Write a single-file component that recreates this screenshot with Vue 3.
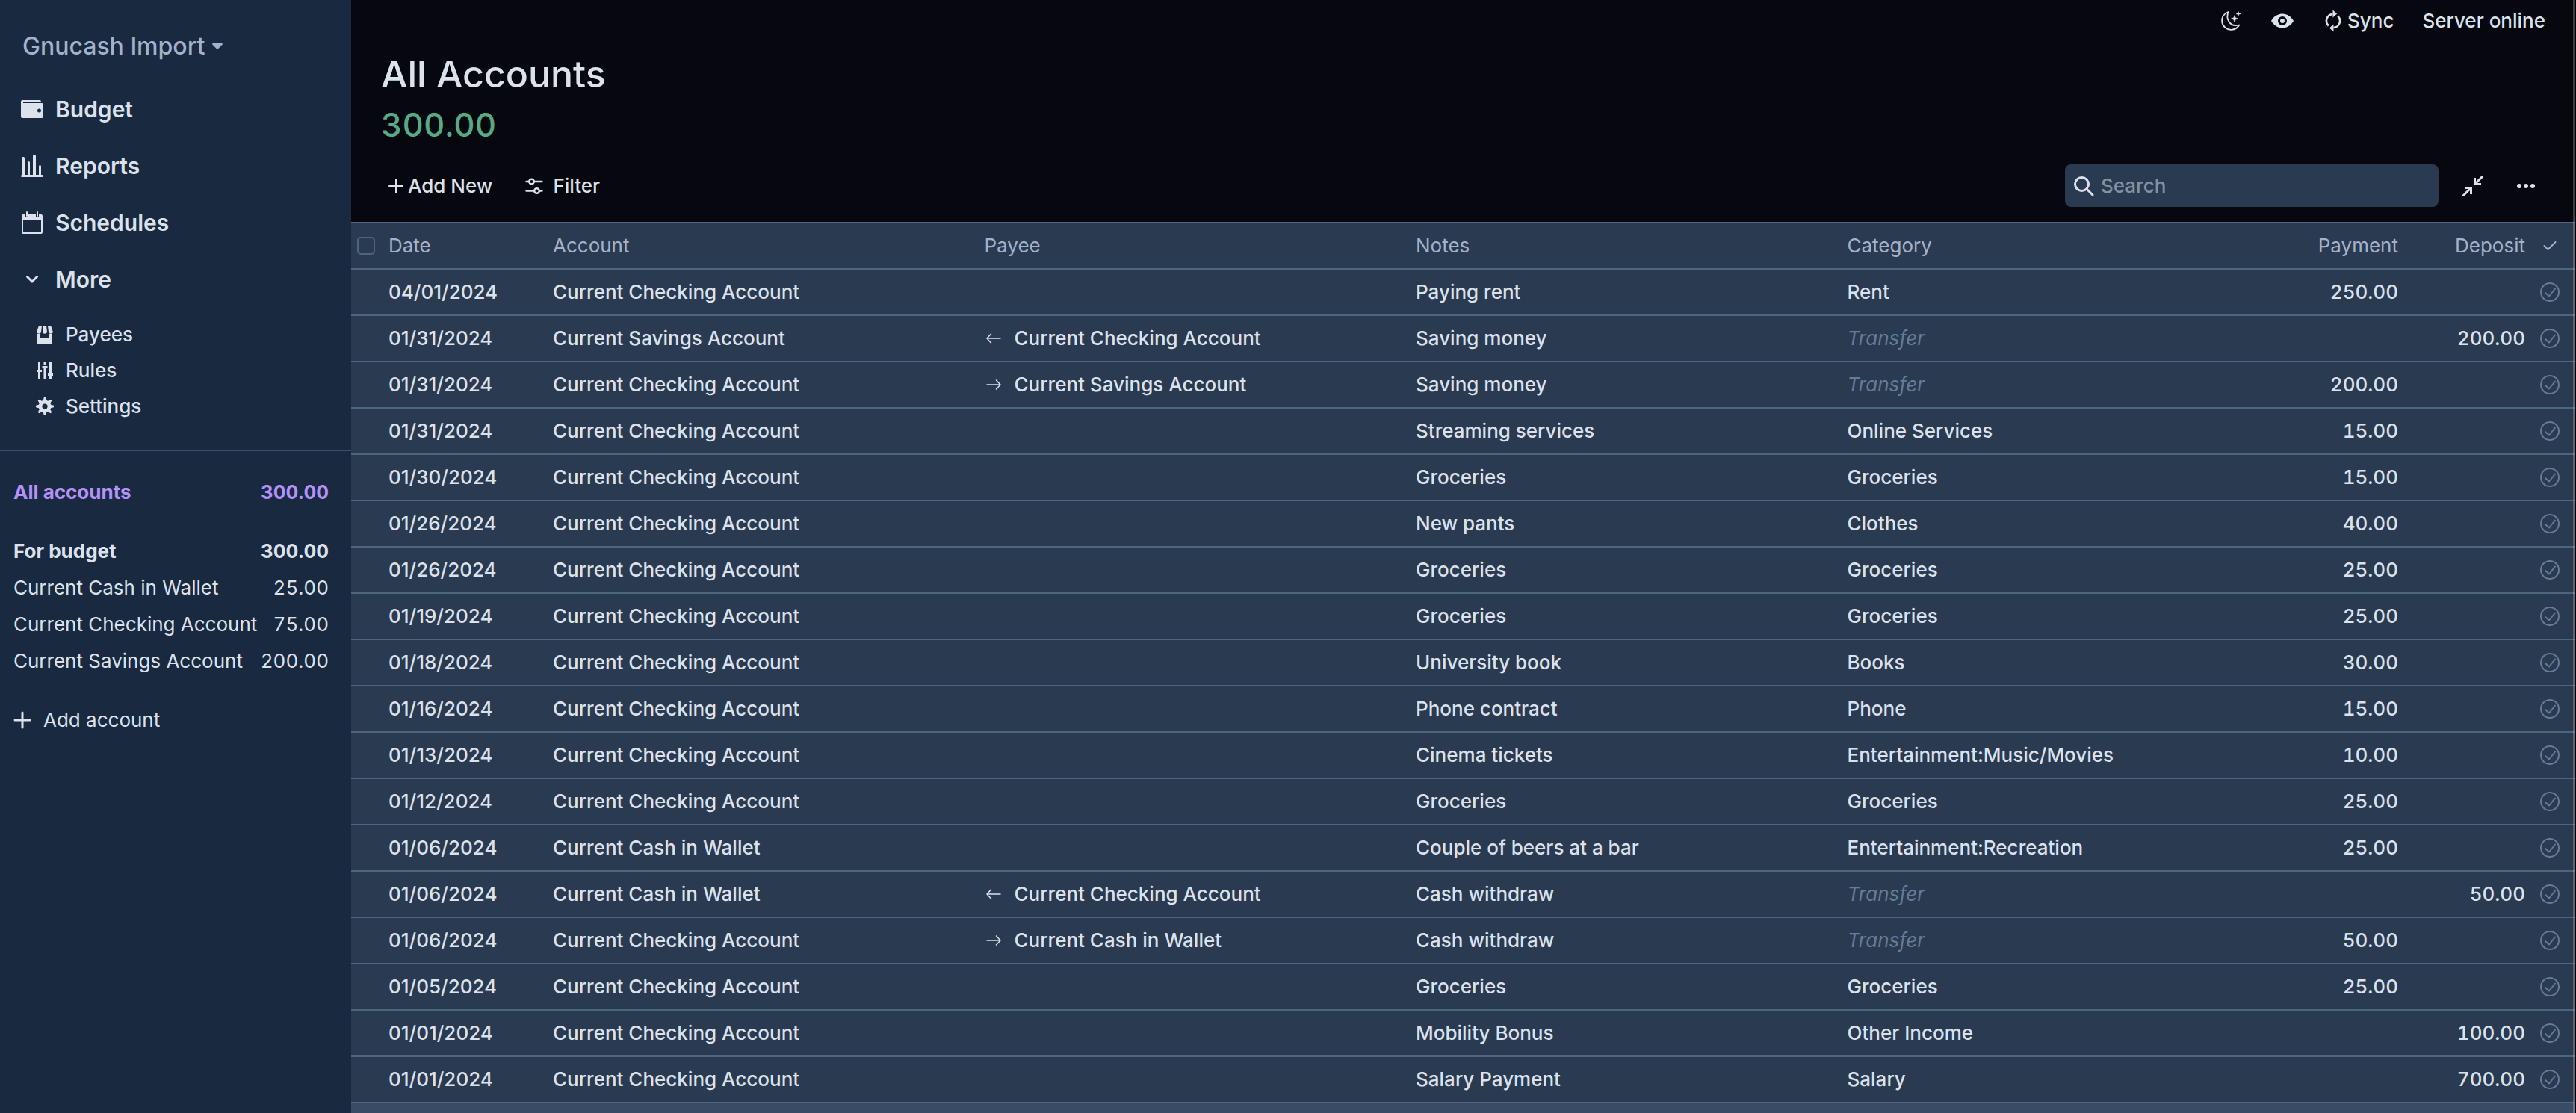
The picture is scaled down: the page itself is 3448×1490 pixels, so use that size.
<script setup>
import { ref } from 'vue'

const search = ref('')
const allSelected = ref(false)

const accounts = [
  { name: 'Current Cash in Wallet', balance: '25.00' },
  { name: 'Current Checking Account', balance: '75.00' },
  { name: 'Current Savings Account', balance: '200.00' },
]

const checking = 'Current Checking Account'
const savings = 'Current Savings Account'
const wallet = 'Current Cash in Wallet'

const transactions = [
  { date: '04/01/2024', account: checking, notes: 'Paying rent', category: 'Rent', payment: '250.00' },
  { date: '01/31/2024', account: savings, from: checking, notes: 'Saving money', deposit: '200.00' },
  { date: '01/31/2024', account: checking, to: savings, notes: 'Saving money', payment: '200.00' },
  { date: '01/31/2024', account: checking, notes: 'Streaming services', category: 'Online Services', payment: '15.00' },
  { date: '01/30/2024', account: checking, notes: 'Groceries', category: 'Groceries', payment: '15.00' },
  { date: '01/26/2024', account: checking, notes: 'New pants', category: 'Clothes', payment: '40.00' },
  { date: '01/26/2024', account: checking, notes: 'Groceries', category: 'Groceries', payment: '25.00' },
  { date: '01/19/2024', account: checking, notes: 'Groceries', category: 'Groceries', payment: '25.00' },
  { date: '01/18/2024', account: checking, notes: 'University book', category: 'Books', payment: '30.00' },
  { date: '01/16/2024', account: checking, notes: 'Phone contract', category: 'Phone', payment: '15.00' },
  { date: '01/13/2024', account: checking, notes: 'Cinema tickets', category: 'Entertainment:Music/Movies', payment: '10.00' },
  { date: '01/12/2024', account: checking, notes: 'Groceries', category: 'Groceries', payment: '25.00' },
  { date: '01/06/2024', account: wallet, notes: 'Couple of beers at a bar', category: 'Entertainment:Recreation', payment: '25.00' },
  { date: '01/06/2024', account: wallet, from: checking, notes: 'Cash withdraw', deposit: '50.00' },
  { date: '01/06/2024', account: checking, to: wallet, notes: 'Cash withdraw', payment: '50.00' },
  { date: '01/05/2024', account: checking, notes: 'Groceries', category: 'Groceries', payment: '25.00' },
  { date: '01/01/2024', account: checking, notes: 'Mobility Bonus', category: 'Other Income', deposit: '100.00' },
  { date: '01/01/2024', account: checking, notes: 'Salary Payment', category: 'Salary', deposit: '700.00' },
]
</script>

<template>
  <div class="app">
    <aside class="sidebar">
      <button type="button" class="file-name">
        Gnucash Import
        <svg width="14" height="8" viewBox="0 0 14 8"><path d="M1 0h12a1 1 0 0 1 .7 1.6L7.8 7.6a1 1 0 0 1-1.6 0L.3 1.6A1 1 0 0 1 1 0z" fill="currentColor" /></svg>
      </button>

      <nav class="nav">
        <a href="#budget" class="nav-item">
          <svg width="30" height="30" viewBox="0 0 30 30" fill="currentColor">
            <path d="M2 3h23a2 2 0 0 1 2 2v1H3v1h25a2 2 0 0 1 2 2v16a2 2 0 0 1-2 2H2a2 2 0 0 1-2-2V5a2 2 0 0 1 2-2zm22.500 11.500a2.500 2.500 0 1 0 0 5 2.500 2.500 0 0 0 0-5z" fill-rule="evenodd" />
          </svg>
          Budget
        </a>
        <a href="#reports" class="nav-item">
          <svg width="30" height="30" viewBox="0 0 30 30" fill="currentColor">
            <rect x="0" y="27" width="30" height="3" rx="1.500" />
            <rect x="1" y="3" width="4" height="25" rx="1.500" />
            <rect x="9" y="9" width="3" height="19" rx="1.500" />
            <rect x="16" y="0" width="4" height="28" rx="1.500" />
            <rect x="24" y="14" width="3" height="14" rx="1.500" />
          </svg>
          Reports
        </a>
        <a href="#schedules" class="nav-item">
          <svg width="30" height="30" viewBox="0 0 30 30" fill="currentColor">
            <path d="M3 4h3v4h4V4h10v4h4V4h3a2 2 0 0 1 2 2v22a2 2 0 0 1-2 2H3a2 2 0 0 1-2-2V6a2 2 0 0 1 2-2zm0 7v17h24V11z" fill-rule="evenodd" />
            <rect x="7" y="0" width="2" height="7" rx="1" />
            <rect x="21" y="0" width="2" height="7" rx="1" />
          </svg>
          Schedules
        </a>
        <button type="button" class="nav-item">
          <svg width="30" height="30" viewBox="0 0 30 30" fill="none" stroke="currentColor" stroke-width="3" stroke-linecap="round"><path d="M8.500 11.500 15 18l6.500-6.500" /></svg>
          More
        </button>
      </nav>

      <nav class="subnav">
        <a href="#payees" class="subnav-item">
          <svg width="24" height="24" viewBox="0 0 24 24" fill="currentColor">
            <path d="M4 0h4L7 8.500C6.500 11.500 2 11.500 1 8.500zM10 0h4l1 8.500c-.5 3-5.500 3-6 0zM16 0h4l3 8.500c-1 3-5.500 3-6 0z" />
            <path d="M2 11h4v5.500h12V11h4v13H2z" />
          </svg>
          Payees
        </a>
        <a href="#rules" class="subnav-item">
          <svg width="24" height="24" viewBox="0 0 24 24" fill="currentColor">
            <path d="M3 0h3v11h2v3H6v10H3V14H1v-3h2zM10.500 0h3v4h-3zM8.500 6h7v3h-2v15h-3V9h-2zM18 0h3v16h2v3h-2v5h-3v-5h-2v-3h2z" />
          </svg>
          Rules
        </a>
        <a href="#settings" class="subnav-item">
          <svg width="24" height="24" viewBox="0 0 20 20" fill="currentColor">
            <path d="M3.940 6.500L2.220 3.640l1.420-1.420L6.500 3.940c.52-.3 1.100-.54 1.700-.7L9 0h2l.8 3.240c.6.16 1.180.4 1.700.7l2.860-1.720 1.420 1.420-1.720 2.860c.3.52.54 1.100.7 1.700L20 9v2l-3.240.8c-.16.6-.4 1.180-.7 1.700l1.720 2.860-1.420 1.420-2.860-1.720c-.52.3-1.100.54-1.700.7L11 20H9l-.8-3.240c-.6-.16-1.180-.4-1.700-.7l-2.860 1.720-1.420-1.420 1.720-2.860c-.3-.52-.54-1.100-.7-1.700L0 11V9l3.240-.8c.16-.6.4-1.180.7-1.700zM10 13a3 3 0 1 0 0-6 3 3 0 0 0 0 6z" fill-rule="evenodd" />
          </svg>
          Settings
        </a>
      </nav>

      <div class="accounts">
        <a href="#all" class="account total active"><span>All accounts</span><span class="num">300.00</span></a>
        <a href="#for-budget" class="account total group"><span>For budget</span><span class="num">300.00</span></a>
        <a v-for="a in accounts" :key="a.name" href="#account" class="account">
          <span>{{ a.name }}</span><span class="num">{{ a.balance }}</span>
        </a>
        <button type="button" class="add-account">
          <svg width="24" height="24" viewBox="0 0 24 24" stroke="currentColor" stroke-width="3" stroke-linecap="round"><path d="M12 2v20M2 12h20" /></svg>
          Add account
        </button>
      </div>
    </aside>

    <main class="main">
      <div class="titlebar">
        <button type="button" class="icon-button" aria-label="Theme">
          <svg width="28" height="28" viewBox="0 0 28 28" fill="none" stroke="currentColor" stroke-width="1.800" stroke-linejoin="round">
            <path d="M10.500 2C4.500 4 1.200 9.500 2.200 15.500 3.300 22 9 26.200 15 25.800c4.500-.3 8-2.300 10.200-6.300-6.200 1.600-11.500-.4-14-5C9 11 9 6 10.500 2z" />
            <path d="M19 6.500l1.200 3.300 3.300 1.200-3.300 1.200L19 15.500l-1.200-3.300-3.300-1.200 3.300-1.200zM24 1.500l.7 2.300 2.300.7-2.300.7-.7 2.300-.7-2.300-2.300-.7 2.300-.7z" fill="currentColor" stroke-width="0.600" />
          </svg>
        </button>
        <button type="button" class="icon-button" aria-label="Privacy mode">
          <svg width="30" height="20" viewBox="0 0 30 20" fill="currentColor">
            <path d="M0 10C3 4.500 8.500.5 15 .5S27 4.500 30 10c-3 5.500-8.500 9.500-15 9.500S3 15.500 0 10zm15-6a6 6 0 1 0 0 12 6 6 0 0 0 0-12zm0 3a3 3 0 1 1 0 6 3 3 0 0 1 0-6z" fill-rule="evenodd" />
          </svg>
        </button>
        <button type="button" class="sync">
          <svg width="22" height="30" viewBox="0 0 22 30" fill="none" stroke="currentColor" stroke-width="2.600">
            <path d="M4.800 21.500A9 9 0 0 1 10.500 6M17.200 8.500A9 9 0 0 1 11.500 24" />
            <path d="M10.500 0.500v10l5.500-5zM11.500 19.500v10l-5.500-5z" fill="currentColor" stroke="none" />
          </svg>
          Sync
        </button>
        <button type="button" class="server">Server online</button>
      </div>

      <header class="header">
        <h1>All Accounts</h1>
        <div class="balance num">300.00</div>
        <div class="toolbar">
          <button type="button" class="tool add-new">
            <svg width="20" height="20" viewBox="0 0 20 20" stroke="currentColor" stroke-width="2" stroke-linecap="round"><path d="M10 1v18M1 10h18" /></svg>
            Add New
          </button>
          <button type="button" class="tool filter">
            <svg width="24" height="24" viewBox="0 0 24 24" fill="none" stroke="currentColor" stroke-width="2.400" stroke-linecap="round">
              <path d="M1.500 6H5M12 6h10.500M1.500 18.500H12M19 18.500h3.500" />
              <circle cx="8.500" cy="6" r="3.300" /><circle cx="15.500" cy="18.500" r="3.300" />
            </svg>
            Filter
          </button>
          <label class="search">
            <svg width="28" height="28" viewBox="0 0 28 28" fill="none" stroke="currentColor" stroke-width="3" stroke-linecap="round"><circle cx="11.500" cy="11.500" r="9" /><path d="M18.500 18.500 26 26" /></svg>
            <input v-model="search" type="text" placeholder="Search" aria-label="Search" />
          </label>
          <button type="button" class="tool collapse" aria-label="Collapse">
            <svg width="28" height="28" viewBox="0 0 28 28" fill="none" stroke="currentColor" stroke-width="3">
              <path d="M26.500 1.500 17 11M1.500 26.500 11 17" stroke-linecap="round" />
              <path d="M16.500 3v8.500H25M3 16.500h8.500V25" />
            </svg>
          </button>
          <button type="button" class="tool menu" aria-label="Menu">
            <svg width="24" height="24" viewBox="0 0 24 24" fill="currentColor"><circle cx="3" cy="12" r="3" /><circle cx="12" cy="12" r="3" /><circle cx="21" cy="12" r="3" /></svg>
          </button>
        </div>
      </header>

      <table class="table">
        <colgroup>
          <col class="col-select" /><col class="col-date" /><col /><col /><col /><col />
          <col class="col-payment" /><col class="col-deposit" /><col class="col-status" />
        </colgroup>
        <thead>
          <tr>
            <th class="select"><input v-model="allSelected" type="checkbox" aria-label="Select all" /></th>
            <th>Date</th>
            <th>Account</th>
            <th>Payee</th>
            <th>Notes</th>
            <th>Category</th>
            <th class="amount">Payment</th>
            <th class="amount">Deposit</th>
            <th class="status">
              <svg width="20" height="20" viewBox="0 0 20 20" fill="none" stroke="currentColor" stroke-width="2" stroke-linecap="round"><path d="M2.500 10 7.500 15 17.500 5" /></svg>
            </th>
          </tr>
        </thead>
        <tbody>
          <tr v-for="(t, i) in transactions" :key="i">
            <td></td>
            <td>{{ t.date }}</td>
            <td>{{ t.account }}</td>
            <td>
              <div v-if="t.from || t.to" class="payee">
                <svg v-if="t.from" width="20" height="14" viewBox="0 0 20 14" fill="none" stroke="currentColor" stroke-width="1.500" stroke-linecap="round"><path d="M19 7H1M6.500 1 1 7l5.500 6" /></svg>
                <svg v-else width="20" height="14" viewBox="0 0 20 14" fill="none" stroke="currentColor" stroke-width="1.500" stroke-linecap="round"><path d="M1 7h18M13.500 1 19 7l-5.500 6" /></svg>
                {{ t.from || t.to }}
              </div>
            </td>
            <td>{{ t.notes }}</td>
            <td :class="{ transfer: !t.category }">{{ t.category || 'Transfer' }}</td>
            <td class="amount num">{{ t.payment }}</td>
            <td class="amount num">{{ t.deposit }}</td>
            <td class="status cleared">
              <svg width="26" height="26" viewBox="0 0 26 26" fill="none" stroke="currentColor" stroke-width="2" stroke-linecap="round" stroke-linejoin="round"><circle cx="13" cy="13" r="12" /><path d="M7 14l5 4.500 8-10" /></svg>
            </td>
          </tr>
        </tbody>
      </table>
    </main>
  </div>
</template>

<style>
body {
  margin: 0;
  background: #000;
}
</style>

<style scoped>
.app {
  box-sizing: border-box;
  display: flex;
  height: 100vh;
  overflow: hidden;
  padding-right: 2px;
  background: #000;
  color: #dce2ec;
  font-family: Inter, "Liberation Sans", sans-serif;
  font-size: 26px;
  line-height: 32px;
  font-weight: 500;
}

button,
input {
  margin: 0;
  padding: 0;
  border: 0;
  background: none;
  color: inherit;
  font: inherit;
}

a {
  color: inherit;
  text-decoration: none;
}

svg {
  display: block;
  flex: none;
}

.num {
  font-variant-numeric: tabular-nums;
}

.sidebar {
  flex: 0 0 470px;
  background: #182940;
}

.file-name {
  display: flex;
  align-items: center;
  gap: 10px;
  margin: 42px 0 0 30px;
  color: #a3b2ca;
  font-size: 32px;
  line-height: 40px;
}

.nav {
  display: flex;
  flex-direction: column;
  padding-top: 26px;
}

.nav-item {
  display: flex;
  align-items: center;
  gap: 16px;
  height: 76px;
  padding-left: 28px;
  font-size: 30px;
  font-weight: 600;
}

.subnav {
  padding: 12px 0 34px;
  border-bottom: 2px solid #3c4f6a;
}

.subnav-item {
  display: flex;
  align-items: center;
  gap: 16px;
  height: 48px;
  padding-left: 48px;
}

.accounts {
  padding: 30px 30px 0 18px;
  font-weight: 400;
}

.account {
  display: flex;
  align-items: center;
  justify-content: space-between;
  height: 49px;
}

.total {
  font-weight: 700;
}

.active {
  color: #b491fa;
}

.group {
  margin-top: 30px;
}

.add-account {
  display: flex;
  align-items: center;
  gap: 16px;
  height: 49px;
  margin-top: 30px;
}

.main {
  position: relative;
  flex: 1;
  min-width: 0;
  background: #3a4c65;
}

/* thin highlight along the window's edge */
.main::after {
  content: "";
  position: absolute;
  inset: 0 0 0 auto;
  width: 2px;
  background: rgba(255, 255, 255, 0.22);
}

.titlebar {
  display: flex;
  align-items: center;
  justify-content: flex-end;
  height: 56px;
  padding-right: 39px;
  background: #07070f;
}

.icon-button {
  margin-right: 40px;
}

.sync {
  display: flex;
  align-items: center;
  gap: 8px;
  margin: 0 38px 0 2px;
}

.header {
  padding: 12px 40px 20px;
  background: #07070f;
}

h1 {
  margin: 0;
  font-size: 50px;
  line-height: 62px;
  font-weight: 500;
}

.balance {
  color: #56aa85;
  font-size: 44px;
  line-height: 74px;
}

.toolbar {
  display: flex;
  align-items: center;
  height: 57px;
  margin-top: 16px;
}

.tool {
  display: flex;
  align-items: center;
}

.add-new {
  gap: 6px;
  margin-left: 10px;
}

.filter {
  gap: 13px;
  margin-left: 44px;
}

.search {
  display: flex;
  align-items: center;
  gap: 9px;
  box-sizing: border-box;
  width: 500px;
  height: 57px;
  margin-left: auto;
  padding-left: 11px;
  border-radius: 8px;
  background: #2a3a50;
}

.search input {
  flex: 1;
  min-width: 0;
  outline: 0;
}

.search input::placeholder {
  color: #84919f;
  opacity: 1;
}

.collapse {
  margin-left: 32px;
}

.menu {
  margin: 0 13px 0 45px;
}

.table {
  width: 100%;
  table-layout: fixed;
  border-spacing: 0;
  border-top: 2px solid #4e6580;
  background: #2a3a50;
}

.col-select {
  width: 40px;
}

.col-date {
  width: 220px;
}

.col-payment {
  width: 180px;
}

.col-deposit {
  width: 170px;
}

.col-status {
  width: 56px;
}

th,
td {
  box-sizing: border-box;
  height: 62px;
  padding: 0 10px;
  border-bottom: 2px solid #4e6580;
  text-align: left;
  white-space: nowrap;
}

th {
  color: #a3b2ca;
  font-weight: 400;
}

th.select {
  padding: 0 0 0 8px;
}

.select input {
  display: block;
  box-sizing: border-box;
  width: 24px;
  height: 24px;
  border: 2px solid #4e6580;
  border-radius: 5px;
  appearance: none;
}

.payee {
  display: flex;
  align-items: center;
  gap: 18px;
}

.payee svg {
  margin-left: 2px;
}

td.transfer {
  color: #657b98;
  font-style: italic;
  font-weight: 400;
}

th.amount,
td.amount {
  text-align: right;
}

th.status,
td.status {
  padding: 0 10px 0 0;
}

.status svg {
  margin: 0 auto;
}

.cleared {
  color: #657b98;
}
</style>
